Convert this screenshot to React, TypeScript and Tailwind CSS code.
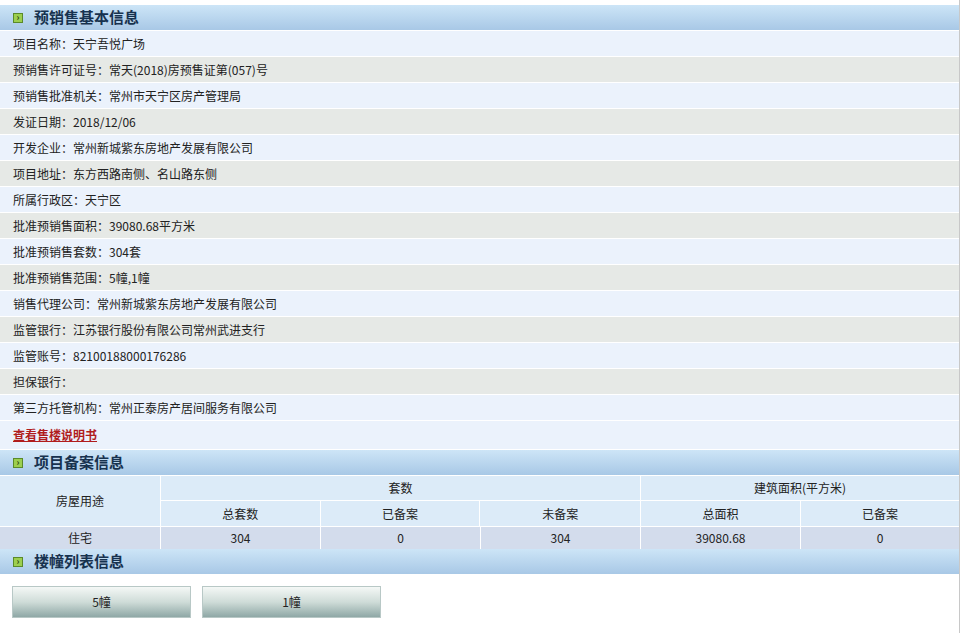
import React from "react";

const rows: [string, string][] = [
  ["项目名称", "天宁吾悦广场"],
  ["预销售许可证号", "常天(2018)房预售证第(057)号"],
  ["预销售批准机关", "常州市天宁区房产管理局"],
  ["发证日期", "2018/12/06"],
  ["开发企业", "常州新城紫东房地产发展有限公司"],
  ["项目地址", "东方西路南侧、名山路东侧"],
  ["所属行政区", "天宁区"],
  ["批准预销售面积", "39080.68平方米"],
  ["批准预销售套数", "304套"],
  ["批准预销售范围", "5幢,1幢"],
  ["销售代理公司", "常州新城紫东房地产发展有限公司"],
  ["监管银行", "江苏银行股份有限公司常州武进支行"],
  ["监管账号", "82100188000176286"],
  ["担保银行", ""],
  ["第三方托管机构", "常州正泰房产居间服务有限公司"],
];

function Header({ title }: { title: string }) {
  return (
    <div className="h-[26px] flex items-center bg-gradient-to-b from-[#cde5f7] to-[#a8c8e6] border-b border-white">
      <span className="ml-[13px] w-[10px] h-[10px] bg-[#9ccf4f] border border-[#5a8a2a] flex items-center justify-center text-[9px] leading-none text-[#2d4a10] font-bold">›</span>
      <span className="ml-[11px] text-[15px] font-bold text-[#17324f]">{title}</span>
    </div>
  );
}

export default function App() {
  const cell = "border-r border-white flex items-center justify-center";
  return (
    <div className="w-[963px] h-[633px] bg-white text-[12px] text-[#222]" style={{ fontFamily: '"Noto Sans CJK SC", "Noto Sans", sans-serif' }}>
      <div className="w-[960px] border-r border-[#c8c8c8] pt-[5px] h-[633px]">
        <Header title="预销售基本信息" />
        {rows.map(([k, v], i) => (
          <div key={k} className={`h-[26px] flex items-center pl-[13px] border-b border-white ${i % 2 === 1 ? "bg-[#e6e9e6]" : "bg-[#ebf2fc]"}`}>
            {k}：{v}
          </div>
        ))}
        <div className="h-[29px] flex items-center pl-[13px] bg-[#ebf2fc] border-b border-white">
          <span className="text-[#b01c1c] font-bold underline">查看售楼说明书</span>
        </div>
        <Header title="项目备案信息" />
        <div className="flex bg-[#dcebf8] border-b border-white">
          <div className={`${cell} w-[161px] h-[50px]`}>房屋用途</div>
          <div className="flex flex-col w-[480px] border-r border-white">
            <div className="h-[25px] flex items-center justify-center border-b border-white">套数</div>
            <div className="flex h-[25px]">
              <div className={`${cell} w-[160px]`}>总套数</div>
              <div className={`${cell} w-[160px]`}>已备案</div>
              <div className="w-[160px] flex items-center justify-center">未备案</div>
            </div>
          </div>
          <div className="flex flex-col flex-1">
            <div className="h-[25px] flex items-center justify-center border-b border-white">建筑面积(平方米)</div>
            <div className="flex h-[25px]">
              <div className={`${cell} w-[160px]`}>总面积</div>
              <div className="flex-1 flex items-center justify-center">已备案</div>
            </div>
          </div>
        </div>
        <div className="flex h-[22px] bg-[#d3dcec]">
          <div className={`${cell} w-[161px]`}>住宅</div>
          <div className={`${cell} w-[160px]`}>304</div>
          <div className={`${cell} w-[160px]`}>0</div>
          <div className={`${cell} w-[160px]`}>304</div>
          <div className={`${cell} w-[160px]`}>39080.68</div>
          <div className="flex-1 flex items-center justify-center">0</div>
        </div>
        <Header title="楼幢列表信息" />
        <div className="flex gap-[11px] pl-[12px] pt-[11px]">
          {["5幢", "1幢"].map((b) => (
            <div key={b} className="w-[179px] h-[32px] flex items-center justify-center bg-gradient-to-b from-[#f4f8f6] via-[#cfdcd8] to-[#8fa8a6] border border-[#b8c8c6]">
              {b}
            </div>
          ))}
        </div>
      </div>
    </div>
  );
}
